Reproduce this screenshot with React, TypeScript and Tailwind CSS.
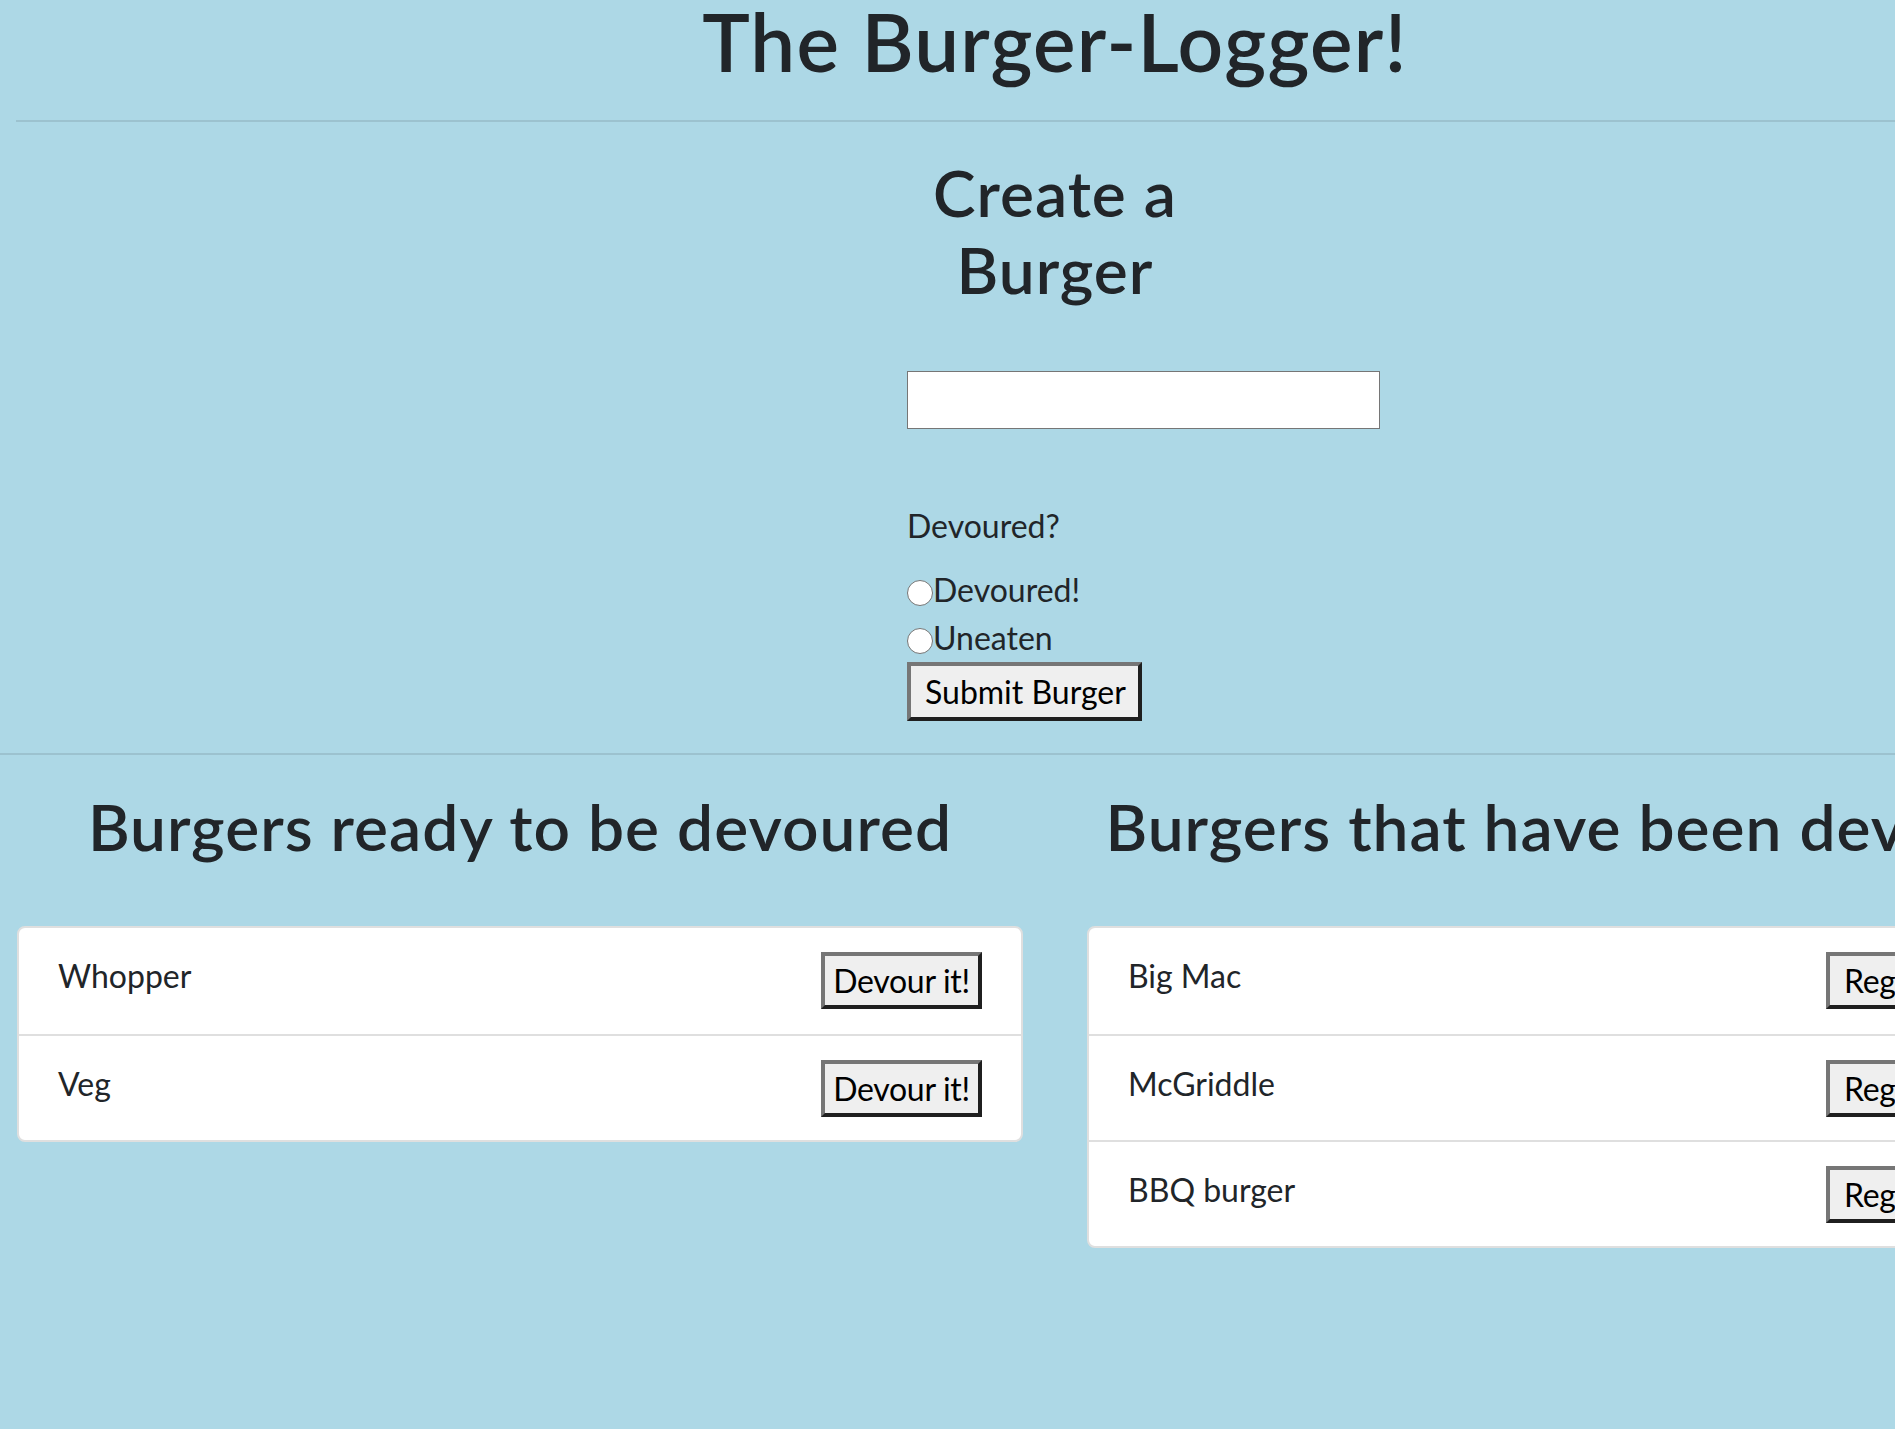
const readyBurgers = ["Whopper", "Veg"];
const eatenBurgers = ["Big Mac", "McGriddle", "BBQ burger"];

const btn =
  "block h-[57px] shrink-0 whitespace-nowrap border-4 border-t-[#767676] border-l-[#767676] border-r-[#1f1f1f] border-b-[#1f1f1f] bg-[#efefef] text-[32px] leading-[49px] tracking-[-0.01em] text-black";

function BurgerCard({ items, label, btnClass }: { items: string[]; label: string; btnClass: string }) {
  return (
    <ul className="overflow-hidden rounded-[8px] border-2 border-[#dfdfdf] bg-white">
      {items.map((name, i) => (
        <li
          key={name}
          className={
            "flex h-[106px] items-start justify-between px-[39px] pt-[24px] " +
            (i > 0 ? "border-t-2 border-[#dfdfdf]" : "")
          }
        >
          <span className="text-[32px] leading-[48px]">{name}</span>
          <button className={btn + " " + btnClass}>{label}</button>
        </li>
      ))}
    </ul>
  );
}

export default function App() {
  return (
    <div className="min-h-screen w-full overflow-hidden bg-[#add8e6] font-['Lato',sans-serif] text-[#212529]">
      <div className="w-[2110px]">
        <div className="px-[16px] pt-[1px]">
          <h1 className="text-center text-[80px] font-semibold leading-[80px] tracking-[0.016em]">
            The Burger-Logger!
          </h1>
          <hr className="mt-[39px] border-t-2 border-[#9cc2cf]" />
        </div>

        <div className="flex justify-center pt-[33px]">
          <form className="w-[296px]">
            <h2 className="text-center text-[64px] font-semibold leading-[76.8px] tracking-[0.016em]">
              Create a Burger
            </h2>
            <input
              type="text"
              className="mt-[62px] block h-[58px] w-[473px] border border-[#767676] bg-white"
            />
            <p className="mt-[73px] text-[32px] leading-[48px]">Devoured?</p>
            <div className="mt-[16px] flex flex-col text-[32px] leading-[48px]">
              <label className="flex items-end">
                <span className="mb-[8px] h-[26px] w-[26px] rounded-full border border-[#767676] bg-white" />
                <span>Devoured!</span>
              </label>
              <label className="flex items-end">
                <span className="mb-[8px] h-[26px] w-[26px] rounded-full border border-[#767676] bg-white" />
                <span>Uneaten</span>
              </label>
            </div>
            <button
              type="button"
              className="block h-[59px] w-[235px] whitespace-nowrap border-4 border-t-[#767676] border-l-[#767676] border-r-[#1f1f1f] border-b-[#1f1f1f] bg-[#efefef] pl-[14px] text-left text-[32px] leading-[51px] text-black"
            >
              Submit Burger
            </button>
          </form>
        </div>

        <hr className="mt-[32px] border-t-2 border-[#9cc2cf]" />

        <div className="grid grid-cols-2 gap-[64px] px-[17px] pt-[34px]">
          <div>
            <h2 className="whitespace-nowrap text-center text-[64px] font-semibold leading-[76.8px] tracking-[0.016em]">
              Burgers ready to be devoured
            </h2>
            <div className="mt-[61px]">
              <BurgerCard items={readyBurgers} label="Devour it!" btnClass="w-[161px] text-center" />
            </div>
          </div>
          <div>
            <h2 className="whitespace-nowrap text-center text-[64px] font-semibold leading-[76.8px] tracking-[0.016em]">
              Burgers that have been devoured
            </h2>
            <div className="mt-[61px]">
              <BurgerCard items={eatenBurgers} label="Regurgitate!" btnClass="w-[226px] pl-[14px] text-left" />
            </div>
          </div>
        </div>
      </div>
    </div>
  );
}
